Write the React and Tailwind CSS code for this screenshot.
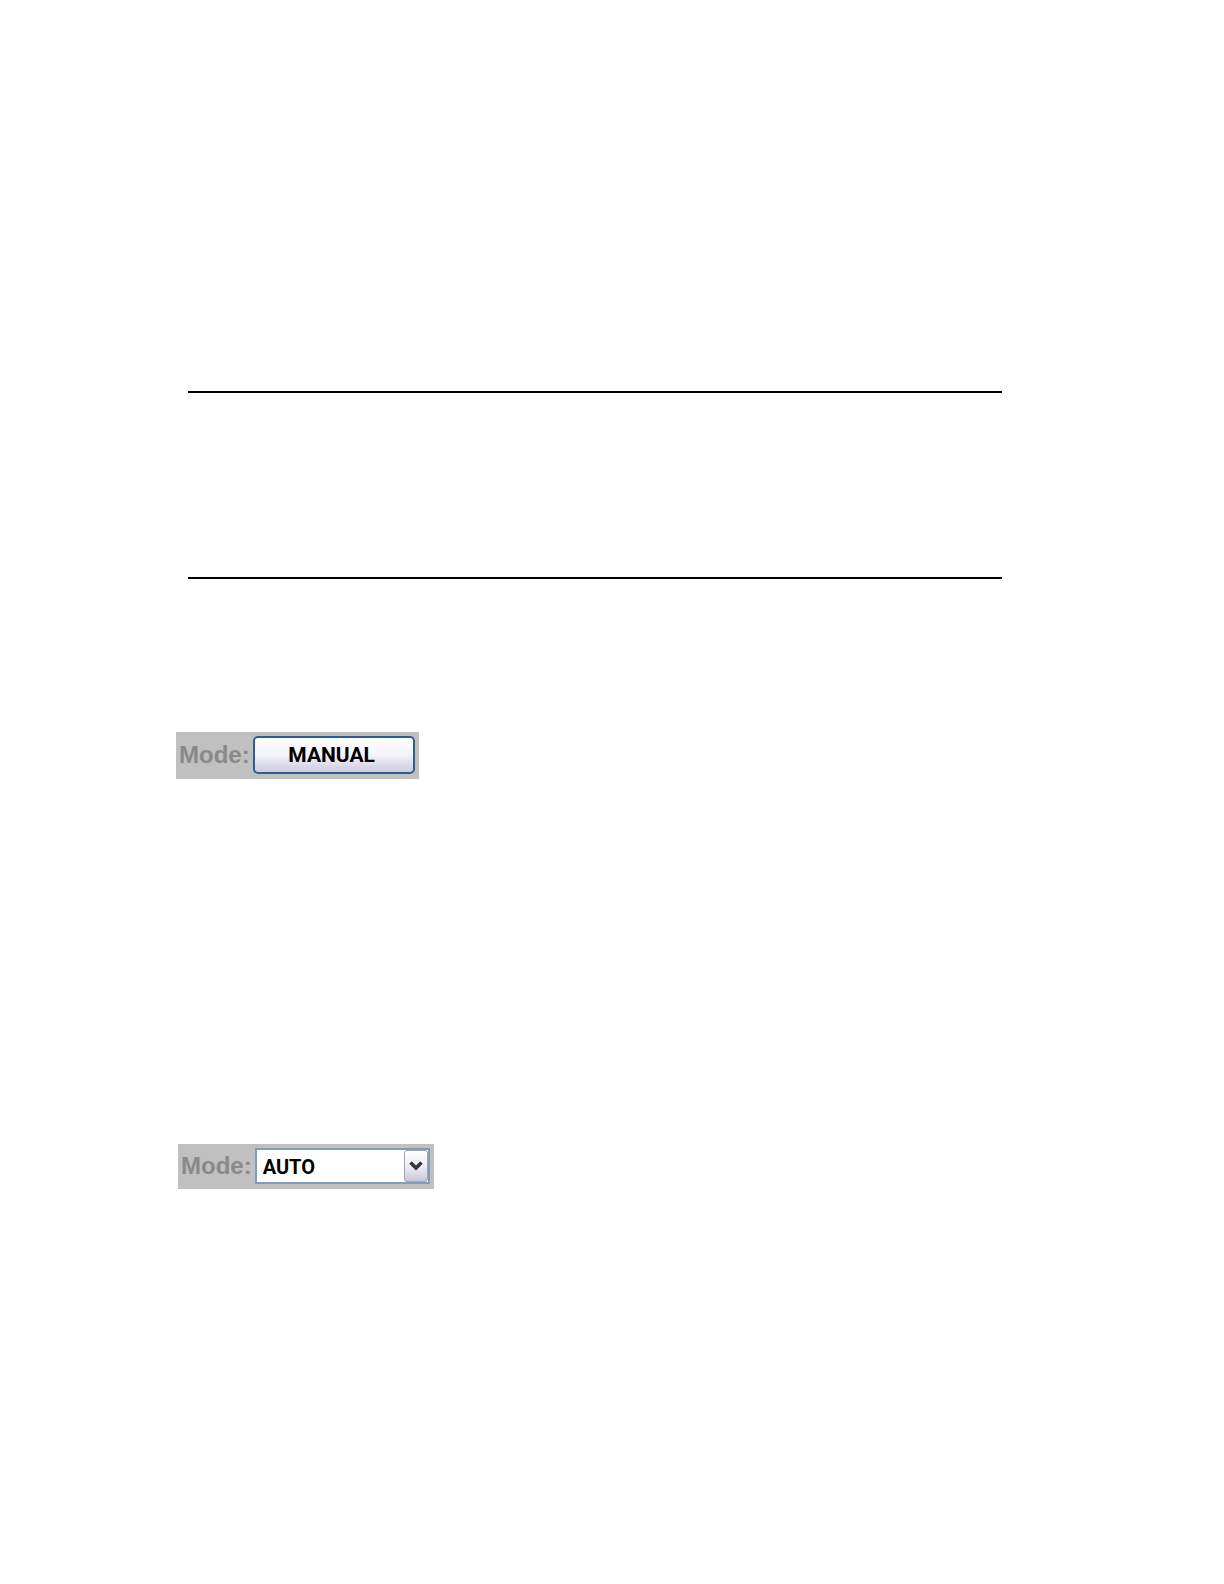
function ModeBar({ htmlFor, className, children }) {
  return (
    <div className={`flex w-fit items-center gap-[3px] bg-[#c0c0c0] pr-1 pb-px pl-[3px] ${className}`}>
      <label
        htmlFor={htmlFor}
        className="font-['Liberation_Sans',sans-serif] text-[24px] leading-6 font-bold text-[#898989]"
      >
        Mode:
      </label>
      {children}
    </div>
  )
}

export default function App() {
  return (
    <main className="min-h-screen bg-white pt-[391px]">
      {/* Rules */}
      <div className="mr-[222px] ml-[188px]">
        <hr className="border-t-2 border-black" />
        <hr className="mt-[184px] border-t-2 border-black" />
      </div>

      {/* Manual mode */}
      <ModeBar htmlFor="manual-mode" className="mt-[153px] ml-[176px] h-[47px]">
        <button
          id="manual-mode"
          type="button"
          className="h-[38px] w-[162px] rounded-[5px] border-2 border-[#2a5f92] bg-linear-to-b from-white via-[#f3f3fa] to-[#cccbe0] pr-1 font-[Roboto,sans-serif] text-[21px] leading-6 font-bold text-black"
        >
          MANUAL
        </button>
      </ModeBar>

      {/* Auto mode */}
      <ModeBar htmlFor="auto-mode" className="mt-[365px] ml-[178px] h-[45px]">
        <div className="relative">
          <select
            id="auto-mode"
            defaultValue="AUTO"
            className="block h-[36px] w-[175px] appearance-none border-2 border-[#7f9db9] bg-white pt-px pl-[6px] font-[Roboto,sans-serif] text-[20px] leading-6 font-bold text-black"
          >
            <option>AUTO</option>
            <option>MANUAL</option>
          </select>
          <span className="pointer-events-none absolute inset-y-[2px] right-[2px] flex w-6 items-center justify-center rounded-[3px] border border-[#a3a3b5] bg-linear-to-b from-white via-[#eeeef5] to-[#c8c7d8]">
            <svg width="14" height="10" viewBox="0 0 14 10" fill="none" aria-hidden="true">
              <path d="M1.5 1.5 L7 7 L12.5 1.5" stroke="#36353f" strokeWidth="3.6" />
            </svg>
          </span>
        </div>
      </ModeBar>
    </main>
  )
}
